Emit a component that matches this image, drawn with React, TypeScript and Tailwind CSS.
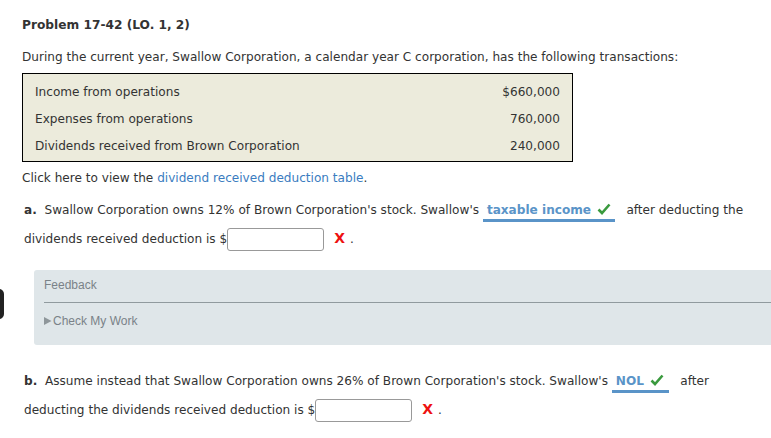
import React from "react";

const rows = [
  { label: "Income from operations", amount: "$660,000" },
  { label: "Expenses from operations", amount: "760,000" },
  { label: "Dividends received from Brown Corporation", amount: "240,000" },
];

function Check() {
  return (
    <svg width="14" height="12" viewBox="0 0 14 12" className="inline-block ml-[6px] align-[-1px]">
      <path d="M1.5 6.5 L5 10 L12.5 1.5" fill="none" stroke="#3a9a3e" strokeWidth="2.6" />
    </svg>
  );
}

function Answer({ text, width }: { text: string; width: string }) {
  return (
    <span
      className={`inline-block whitespace-nowrap ${width} border-b-[3px] border-[#5a94c8] leading-[17px] pl-[4px] font-bold text-[#5a94c8]`}
    >
      {text}
      <Check />
    </span>
  );
}

function Wrong() {
  return (
    <span className="ml-[10px] font-bold text-[#ee1111] text-[14px]">
      X <span className="text-[#333] font-normal text-[12px]">.</span>
    </span>
  );
}

function Box({ width }: { width: string }) {
  return (
    <span className={`inline-block ${width} h-[23px] align-middle border border-[#999] rounded-[3px] bg-white`} />
  );
}

export default function App() {
  return (
    <div className="relative w-[771px] h-[438px] overflow-hidden bg-white text-[12.1px] text-[#333] font-['DejaVu_Sans',Verdana,sans-serif]">
      <div className="px-[22px] pt-[17px]">
        <h2 className="font-bold text-[12.2px] leading-[16px]">Problem 17-42 (LO. 1, 2)</h2>

        <p className="mt-[16px] leading-[16px]">
          During the current year, Swallow Corporation, a calendar year C corporation, has the following transactions:
        </p>

        <div className="mt-[8px] w-[551px] border border-black bg-[#ecebdc] px-[12px] pt-[5px] pb-[1px]">
          {rows.map((r) => (
            <div key={r.label} className="flex justify-between h-[27px] items-center">
              <span>{r.label}</span>
              <span>{r.amount}</span>
            </div>
          ))}
        </div>

        <p className="mt-[8px] leading-[16px]">
          Click here to view the <span className="text-[#3a7cc0]">dividend received deduction table</span>.
        </p>

        <div className="pl-[2px] mt-[10px] leading-[28px]">
          <div className="whitespace-nowrap">
            <b>a.</b>&nbsp; Swallow Corporation owns 12% of Brown Corporation's stock. Swallow's{" "}
            <Answer text="taxable income" width="w-[132px]" />
            &nbsp;&nbsp; after deducting the
          </div>
          <div>
            dividends received deduction is $<Box width="w-[97px]" />
            <Wrong />
          </div>
        </div>
      </div>

      {/* partially visible control at the left edge */}
      <div className="absolute left-0 top-[289px] w-[10px] h-[30px] -translate-x-[6px] rounded-full bg-[#222]" />

      <div className="ml-[34px] mt-[17px] h-[75px] rounded-l-[3px] bg-[#dfe6e9] pl-[10px] pt-[7px] font-['Liberation_Sans',Arial,sans-serif] text-[12px] text-[#7a8288]">
        <div className="leading-[16px]">Feedback</div>
        <div className="mt-[9px] border-t border-[#909a9e]" />
        <div className="mt-[10px] leading-[16px] flex items-center">
          <svg width="8" height="8" viewBox="0 0 8 8" className="mr-[1px]">
            <path d="M0 0 L7.5 4 L0 8 Z" fill="#8e969a" />
          </svg>
          Check My Work
        </div>
      </div>

      <div className="px-[24px] mt-[22px] leading-[28px]">
        <div className="whitespace-nowrap">
          <b>b.</b>&nbsp; Assume instead that Swallow Corporation owns 26% of Brown Corporation's stock. Swallow's{" "}
          <Answer text="NOL" width="w-[57px]" />
          &nbsp;&nbsp; after
        </div>
        <div>
          deducting the dividends received deduction is $<Box width="w-[97px]" />
          <Wrong />
        </div>
      </div>
    </div>
  );
}
